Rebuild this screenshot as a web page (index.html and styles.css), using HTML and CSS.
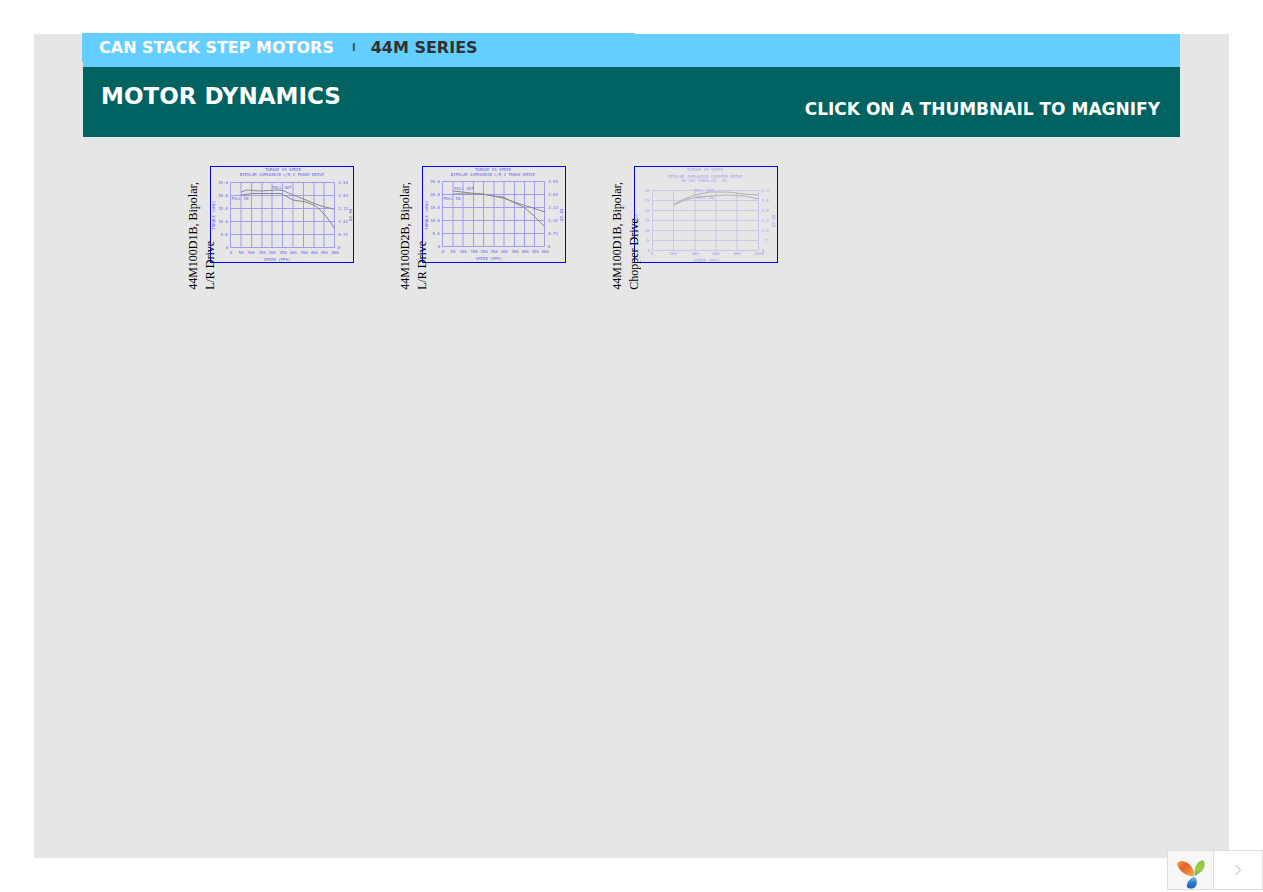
FILE: index.html
```html
<!DOCTYPE html>
<html lang="en">
<head>
<meta charset="utf-8">
<title>44M Series - Motor Dynamics</title>
<link rel="stylesheet" href="styles.css">
</head>
<body>
<main class="page">
  <header class="banner">
    <div class="series">
      <div class="series-title"><span>CAN STACK STEP MOTORS</span><span class="divider">I</span><span class="series-name">44M SERIES</span></div>
    </div>
    <div class="section">
      <h1>MOTOR DYNAMICS</h1>
      <p>CLICK ON A THUMBNAIL TO MAGNIFY</p>
    </div>
  </header>
  <div class="thumbs">
    <figure class="thumb">
      <a href="#d1b-lr" aria-label="44M100D1B, Bipolar, L/R Drive">
        <svg class="chart" viewBox="0 0 142 95">
          <path class="grid" d="M19.500 15.500H123.500M19.500 28.500H123.500M19.500 41.500H123.500M19.500 54.500H123.500M19.500 67.500H123.500M19.500 80.500H123.500M19.500 15.500V80.500M30 15.500V80.500M40.500 15.500V80.500M51 15.500V80.500M61 15.500V80.500M71.500 15.500V80.500M82 15.500V80.500M92.500 15.500V80.500M103 15.500V80.500M113 15.500V80.500M123.500 15.500V80.500"/>
          <path class="curve" d="M30 25L36 23L50 24L65 23L72 23.500L82 28L95 33L110 39L123 42"/>
          <path class="curve" d="M30 28L42 26.500H70L82 33L95 35L105 39L114 48L120 56L123 61"/>
          <g class="tiny">
            <text x="72" y="4">TORQUE VS SPEED</text>
            <text x="71" y="9">BIPOLAR 44M100D1B L/R 2 PHASE DRIVE</text>
            <text x="71" y="22">PULL OUT</text><text x="29" y="33">PULL IN</text>
            <text x="12" y="17">25.0</text><text x="12" y="30">20.0</text><text x="12" y="43">15.0</text><text x="12" y="56">10.0</text><text x="13" y="69">5.0</text><text x="16" y="82">0</text>
            <text x="132" y="17">3.54</text><text x="132" y="30">2.83</text><text x="132" y="43">2.12</text><text x="132" y="56">1.42</text><text x="132" y="69">0.71</text><text x="128" y="82">0</text>
            <text x="20" y="87">0</text><text x="30" y="87">50</text><text x="40" y="87">100</text><text x="51" y="87">150</text><text x="61" y="87">200</text><text x="72" y="87">250</text><text x="82" y="87">300</text><text x="93" y="87">350</text><text x="103" y="87">400</text><text x="113" y="87">450</text><text x="124" y="87">500</text>
            <text x="66" y="94">SPEED (PPS)</text>
            <text transform="translate(4 48) rotate(-90)">TORQUE (mNm)</text><text transform="translate(141 48) rotate(-90)">OZ-IN</text>
          </g>
        </svg>
      </a>
      <figcaption>44M100D1B, Bipolar,<br>L/R Drive</figcaption>
    </figure>
    <figure class="thumb">
      <a href="#d2b-lr" aria-label="44M100D2B, Bipolar, L/R Drive">
        <svg class="chart" viewBox="0 0 142 95">
          <path class="grid" d="M19.500 14.500H121.500M19.500 27.500H121.500M19.500 40.500H121.500M19.500 53.500H121.500M19.500 66.500H121.500M19.500 79.500H121.500M19.500 14.500V79.500M30 14.500V79.500M40 14.500V79.500M50.500 14.500V79.500M60.500 14.500V79.500M71 14.500V79.500M81 14.500V79.500M91.500 14.500V79.500M101.500 14.500V79.500M111.500 14.500V79.500M121.500 14.500V79.500"/>
          <path class="curve" d="M30 24L48 26L63 27.500L80 31L94 36L107 40L122 45"/>
          <path class="curve" d="M30 27L60 27L70 29L80 30L92 36L102 41L110 48L122 60"/>
          <g class="tiny">
            <text x="70" y="4">TORQUE VS SPEED</text>
            <text x="70" y="9">BIPOLAR 44M100D2B L/R 2 PHASE DRIVE</text>
            <text x="41" y="23">PULL OUT</text><text x="29" y="33">PULL IN</text>
            <text x="12" y="16">25.0</text><text x="12" y="29">20.0</text><text x="12" y="42">15.0</text><text x="12" y="55">10.0</text><text x="13" y="68">5.0</text><text x="16" y="81">0</text>
            <text x="130" y="16">3.54</text><text x="130" y="29">2.83</text><text x="130" y="42">2.12</text><text x="130" y="55">1.42</text><text x="130" y="68">0.71</text><text x="126" y="81">0</text>
            <text x="20" y="86">0</text><text x="30" y="86">50</text><text x="40" y="86">100</text><text x="51" y="86">150</text><text x="61" y="86">200</text><text x="71" y="86">250</text><text x="81" y="86">300</text><text x="92" y="86">350</text><text x="102" y="86">400</text><text x="112" y="86">450</text><text x="122" y="86">500</text>
            <text x="66" y="93">SPEED (PPS)</text>
            <text transform="translate(5 48) rotate(-90)">TORQUE (mNm)</text><text transform="translate(140 48) rotate(-90)">OZ-IN</text>
          </g>
        </svg>
      </a>
      <figcaption>44M100D2B, Bipolar,<br>L/R Drive</figcaption>
    </figure>
    <figure class="thumb">
      <a href="#d1b-chopper" aria-label="44M100D1B, Bipolar, Chopper Drive">
        <svg class="chart faint" viewBox="0 0 142 95">
          <path class="grid" d="M17.500 23.500H123.500M17.500 33.500H123.500M17.500 43.500H123.500M17.500 53.500H123.500M17.500 63.500H123.500M17.500 73.500H123.500M17.500 83.500H123.500M17.500 23.500V83.500M38.500 23.500V83.500M60 23.500V83.500M81 23.500V83.500M102 23.500V83.500M123.500 23.500V83.500"/>
          <path class="curve" d="M39 37L49 32L60 28L75 25L93 25L108 27L124 28"/>
          <path class="curve" d="M39 38L50 33L60 30.500L75 29L92 28L110 29L124 32"/>
          <g class="tiny">
            <text x="70" y="4">TORQUE VS SPEED</text>
            <text x="70" y="11">BIPOLAR 44M100D1B CHOPPER DRIVE</text>
            <text x="69" y="15">40 VDC PARALLEL .8A</text>
            <text x="69" y="25">PULL OUT</text><text x="70" y="32">PULL IN</text>
            <text x="12" y="25">30</text><text x="12" y="35">25</text><text x="12" y="45">20</text><text x="12" y="55">15</text><text x="12" y="65">10</text><text x="13" y="75">5</text><text x="14" y="85">0</text>
            <text x="130" y="25">4.3</text><text x="130" y="35">3.5</text><text x="130" y="45">2.8</text><text x="130" y="55">2.1</text><text x="130" y="65">1.4</text><text x="130" y="75">.7</text><text x="128" y="85">0</text>
            <text x="17" y="88">0</text><text x="38" y="88">200</text><text x="60" y="88">400</text><text x="81" y="88">600</text><text x="102" y="88">800</text><text x="124" y="88">1000</text>
            <text x="72" y="95">SPEED (PPS)</text>
            <text transform="translate(3 54) rotate(-90)">TORQUE</text><text transform="translate(140 54) rotate(-90)">OZ-IN</text>
          </g>
        </svg>
      </a>
      <figcaption>44M100D1B, Bipolar,<br>Chopper Drive</figcaption>
    </figure>
  </div>
</main>
<div class="toolbar">
  <a class="brand" href="#" aria-label="Yii">
    <svg width="30" height="30" viewBox="0 0 30 30">
      <defs>
        <linearGradient id="orange" x1="0" y1="0" x2="1" y2="1"><stop offset="0" stop-color="#f5a13b"/><stop offset=".4" stop-color="#e2602c"/><stop offset="1" stop-color="#f6b04a"/></linearGradient>
        <linearGradient id="green" x1="0" y1="0" x2="0" y2="1"><stop offset="0" stop-color="#8dc044"/><stop offset=".6" stop-color="#a0cd48"/><stop offset="1" stop-color="#5cae4b"/></linearGradient>
        <linearGradient id="blue" x1="0" y1="0" x2="0" y2="1"><stop offset="0" stop-color="#83c3e8"/><stop offset=".5" stop-color="#2f80cc"/><stop offset="1" stop-color="#1263b5"/></linearGradient>
      </defs>
      <path fill="url(#orange)" d="M1 5C3 1 9 1 14 6C17 9 18.500 13 18.500 17C12 18 3 13 1 5Z"/>
      <path fill="url(#green)" d="M27 1C30 4 29 9 26 12C24 14 21 15 19.500 17C17 10 20 3 27 1Z"/>
      <path fill="url(#blue)" d="M18.500 17.500C21 20 22 25 19 28C17 30 13 30 11 28C10 24 14 19 18.500 17.500Z"/>
    </svg>
  </a>
  <button class="toggle" type="button" aria-label="Expand toolbar">
    <svg width="10" height="12" viewBox="0 0 10 12"><path d="M2.500 1L7.500 6L2.500 11" fill="none" stroke="#aaa"/></svg>
  </button>
</div>
</body>
</html>
```
FILE: styles.css
```css
body {
  margin: 0;
  background: #fff;
}

.page {
  box-sizing: border-box;
  display: flow-root;
  margin: 34px;
  min-height: calc(100vh - 68px);
  padding: 0 49px;
  background: #e6e6e6;
}

.banner {
  font-family: "DejaVu Sans", sans-serif;
  font-weight: bold;
  color: #fff;
}

.series {
  display: flow-root;
  height: 33px;
  background: #63ceff;
}

.series-title {
  box-sizing: border-box;
  display: flex;
  align-items: center;
  width: 553px;
  max-width: 100%;
  height: 29px;
  margin: -1px 0 0 -1px;
  padding-left: 17px;
  background: #63ceff;
  font-size: 16px;
}

.divider {
  margin: 0 15px 0 18px;
  font-size: 10px;
  color: #245e6c;
}

.series-name {
  color: #313131;
}

.section {
  display: flex;
  justify-content: space-between;
  height: 70px;
  padding: 0 20px 0 18px;
  background: #006361;
}

.section h1 {
  margin: 17px 0 0;
  font-size: 23px;
  line-height: 24px;
}

.section p {
  margin: 32px 0 0;
  font-size: 17px;
  line-height: 20px;
}

.thumbs {
  display: flex;
  flex-wrap: wrap;
  gap: 68px;
  padding: 29px 0 29px 127px;
}

.thumb {
  position: relative;
  width: 144px;
  margin: 0;
}

.thumb a {
  display: block;
  border: 1px solid #0000f0;
}

.thumb figcaption {
  position: absolute;
  left: -25px;
  bottom: -27px;
  writing-mode: vertical-rl;
  transform: rotate(180deg);
  font-family: "Liberation Serif", serif;
  font-size: 12px;
  line-height: 17px;
  white-space: nowrap;
  color: #000;
  pointer-events: none;
}

.chart {
  display: block;
  width: 100%;
}

.grid,
.curve {
  fill: none;
  stroke: #a09cf2;
}

.curve {
  stroke: #88888c;
}

.tiny {
  fill: #6661ee;
  font-family: "DejaVu Sans Mono", monospace;
  font-size: 4px;
  text-anchor: middle;
}

.faint .grid {
  stroke: #c9c7ec;
}

.faint .curve {
  stroke: #b2b2b5;
}

.faint .tiny {
  fill: #a5a2ec;
}

.toolbar {
  position: fixed;
  right: 0;
  bottom: 2px;
  display: flex;
  box-sizing: border-box;
  width: 96px;
  height: 40px;
  border: 1px solid #ddd;
  background: #fff;
}

.brand {
  display: flex;
  width: 45px;
  align-items: flex-end;
  justify-content: center;
  border-right: 1px solid #ddd;
  background: #f7f7f7;
}

.toggle {
  display: flex;
  flex: 1;
  align-items: center;
  justify-content: center;
  border: 0;
  padding: 0;
  background: #fff;
}
```
